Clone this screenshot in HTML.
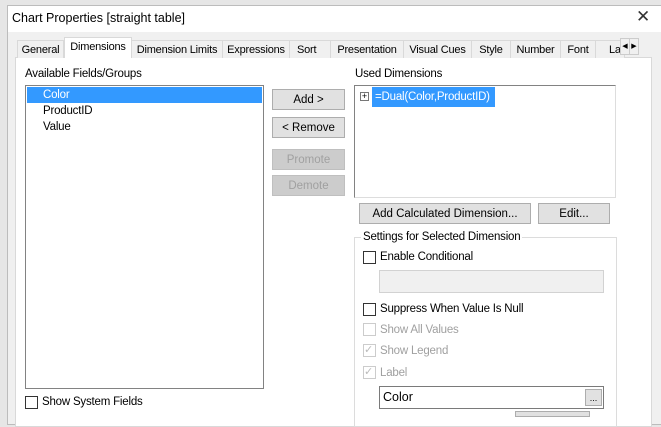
<!DOCTYPE html>
<html><head><style>
*{box-sizing:border-box;margin:0;padding:0}
body{width:661px;height:415px;overflow:hidden;background:#e6e6e6;font-family:"Liberation Sans",sans-serif;font-size:11px;color:#000;position:relative}
.a{position:absolute}
.win{left:7px;top:5px;width:660px;height:420px;background:#f0f0f0;border:1px solid #bcbcbc}
.title{left:8px;top:6px;width:653px;height:26px;background:#fff}
.tab{position:absolute;top:40px;height:18px;border:1px solid #d9d9d9;border-bottom:none;background:#f0f0f0;text-align:center;line-height:18px;font-size:11px;letter-spacing:-0.2px}
.panel{left:15px;top:57px;width:637px;height:370px;background:#fff;border:1px solid #d9d9d9}
.btn{position:absolute;background:#e1e1e1;border:1px solid #adadad;text-align:center;font-size:11.5px;line-height:21px}
.dis{color:#a0a0a0;background:#ccc;border-color:#bfbfbf}
.cb{position:absolute;width:13px;height:13px;border:1px solid #333;background:#fff}
.cbd{border-color:#ccc}
.lbl{position:absolute;font-size:11.5px;letter-spacing:-0.2px}
.arr{position:absolute;top:38px;width:10px;height:17px;background:#f0f0f0;border:1px solid #ccc;font-size:7px;line-height:15px;text-align:center}
</style></head><body>
<div class="a win"></div>
<div class="a title"></div>
<div class="a" style="left:12px;top:11px;font-size:12.5px">Chart Properties [straight table]</div>
<div class="a" style="left:636px;top:7px;font-size:17px;color:#333">✕</div>
<div class="a panel"></div>
<div class="tab" style="left:17px;width:47px">General</div>
<div class="tab" style="left:64px;top:37px;height:21px;width:68px;background:#fff;z-index:2;line-height:19px">Dimensions</div>
<div class="tab" style="left:131px;width:92px">Dimension Limits</div>
<div class="tab" style="left:222px;width:68px">Expressions</div>
<div class="tab" style="left:289px;width:42px;text-align:left;padding-left:7px">Sort</div>
<div class="tab" style="left:330px;width:74px">Presentation</div>
<div class="tab" style="left:403px;width:69px">Visual Cues</div>
<div class="tab" style="left:471px;width:40px">Style</div>
<div class="tab" style="left:510px;width:51px">Number</div>
<div class="tab" style="left:560px;width:36px">Font</div>
<div class="tab" style="left:595px;width:30px;text-align:left;padding-left:13px;overflow:hidden">La</div>
<div class="arr" style="left:620px">◀</div>
<div class="arr" style="left:629px">▶</div>

<div class="lbl" style="left:25px;top:68px">Available Fields/Groups</div>
<div class="a" style="left:25px;top:85px;width:239px;height:304px;border:1px solid #828282;background:#fff"></div>
<div class="a" style="left:27px;top:87px;width:235px;height:16px;background:#3399ff"></div>
<div class="lbl" style="left:43px;top:89px;color:#fff">Color</div>
<div class="lbl" style="left:43px;top:105px">ProductID</div>
<div class="lbl" style="left:43px;top:121px">Value</div>
<div class="btn" style="left:272px;top:89px;width:73px;height:21px">Add &gt;</div>
<div class="btn" style="left:272px;top:117px;width:73px;height:21px">&lt; Remove</div>
<div class="btn dis" style="left:272px;top:149px;width:73px;height:21px">Promote</div>
<div class="btn dis" style="left:272px;top:175px;width:73px;height:21px">Demote</div>
<div class="cb" style="left:25px;top:396px"></div>
<div class="lbl" style="left:42px;top:396px">Show System Fields</div>

<div class="lbl" style="left:355px;top:68px">Used Dimensions</div>
<div class="a" style="left:354px;top:85px;width:262px;height:113px;border:1px solid #828282;border-right-color:#ddd;border-bottom-color:#ddd;background:#fff"></div>
<div class="a" style="left:360px;top:92px;width:9px;height:9px;border:1px solid #777;font-size:9px;line-height:7px;text-align:center;background:#fff">+</div>
<div class="a" style="left:372px;top:87px;width:123px;height:20px;background:#3399ff"></div>
<div class="lbl" style="left:375px;top:91px;color:#fff">=Dual(Color,ProductID)</div>
<div class="btn" style="left:359px;top:203px;width:172px;height:21px">Add Calculated Dimension...</div>
<div class="btn" style="left:538px;top:203px;width:72px;height:21px">Edit...</div>

<div class="a" style="left:354px;top:237px;width:263px;height:190px;border:1px solid #dcdcdc"></div>
<div class="lbl" style="left:361px;top:231px;background:#fff;padding:0 2px">Settings for Selected Dimension</div>
<div class="cb" style="left:363px;top:251px"></div>
<div class="lbl" style="left:380px;top:251px">Enable Conditional</div>
<div class="a" style="left:379px;top:270px;width:225px;height:23px;background:#f0f0f0;border:1px solid #d2d2d2"></div>
<div class="cb" style="left:363px;top:303px"></div>
<div class="lbl" style="left:380px;top:303px">Suppress When Value Is Null</div>
<div class="cb cbd" style="left:363px;top:323px"></div>
<div class="lbl" style="left:380px;top:324px;color:#a0a0a0">Show All Values</div>
<div class="cb cbd" style="left:363px;top:344px;color:#bbb;font-size:11px;line-height:11px">✓</div>
<div class="lbl" style="left:380px;top:345px;color:#a0a0a0">Show Legend</div>
<div class="cb cbd" style="left:363px;top:366px;color:#bbb;font-size:11px;line-height:11px">✓</div>
<div class="lbl" style="left:380px;top:367px;color:#a0a0a0">Label</div>
<div class="a" style="left:379px;top:386px;width:225px;height:23px;background:#fff;border:1px solid #7a7a7a"></div>
<div class="a" style="left:383px;top:390px;font-size:12.5px">Color</div>
<div class="a" style="left:585px;top:389px;width:17px;height:17px;background:#e1e1e1;border:1px solid #adadad;font-size:9px;text-align:center;line-height:17px">...</div>
<div class="a" style="left:515px;top:411px;width:75px;height:6px;border:1px solid #adadad;background:#e1e1e1"></div>
</body></html>
